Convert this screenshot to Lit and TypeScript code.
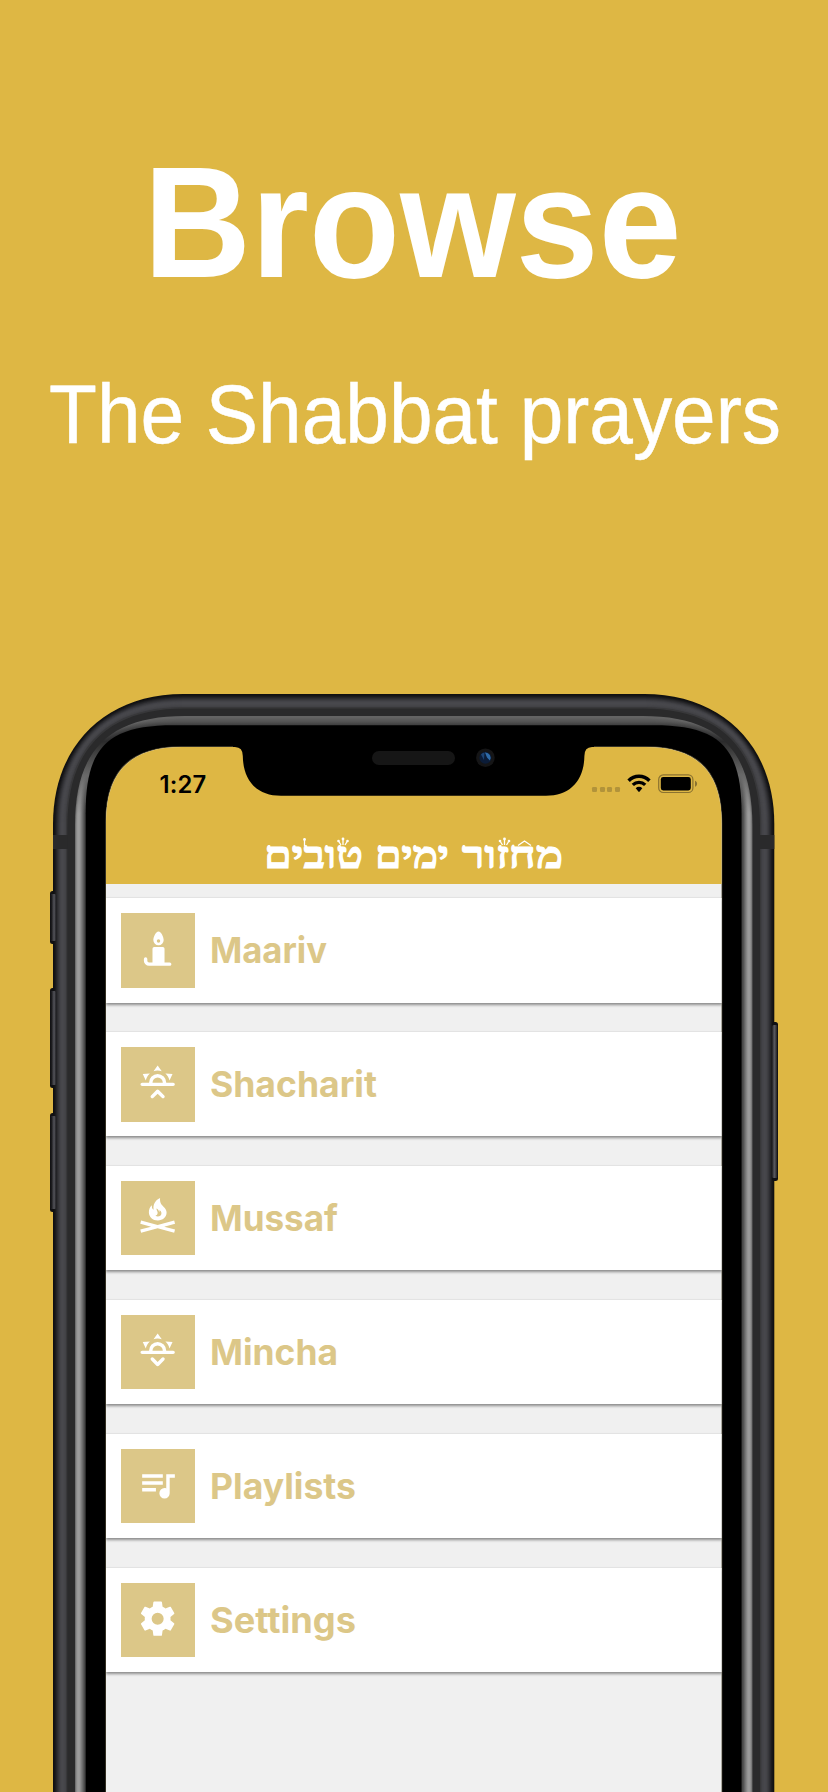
import { LitElement, html, css, svg } from "lit";
import { customElement, property } from "lit/decorators.js";

const SUNSET =
  "M3,12H7A5,5 0 0,1 12,7A5,5 0 0,1 17,12H21A1,1 0 0,1 22,13A1,1 0 0,1 21,14H3A1,1 0 0,1 2,13A1,1 0 0,1 3,12M15,12A3,3 0 0,0 12,9A3,3 0 0,0 9,12H15M12,2L14.39,5.42C13.65,5.15 12.84,5 12,5C11.16,5 10.35,5.15 9.61,5.42L12,2M3.34,7L7.5,6.65C6.9,7.16 6.36,7.78 5.94,8.5C5.5,9.24 5.25,10 5.11,10.79L3.34,7M20.65,7L18.88,10.79C18.74,10 18.47,9.23 18.05,8.5C17.63,7.78 17.1,7.15 16.5,6.64L20.65,7";

const ICONS: Record<string, string> = {
  candle:
    "M12.5,2C10.84,2 9.5,5.34 9.5,7A3,3 0 0,0 12.5,10A3,3 0 0,0 15.5,7C15.5,5.34 14.16,2 12.5,2M12.5,6.5A1,1 0 0,1 13.5,7.5A1,1 0 0,1 12.5,8.5A1,1 0 0,1 11.5,7.5A1,1 0 0,1 12.5,6.5M10,11A1,1 0 0,0 9,12V20H7A1,1 0 0,1 6,19V18A1,1 0 0,0 5,17A1,1 0 0,0 4,18V19A3,3 0 0,0 7,22H19A1,1 0 0,0 20,21A1,1 0 0,0 19,20H16V12A1,1 0 0,0 15,11H10Z",
  sunrise:
    SUNSET +
    "M12.71,16.3L15.82,19.41C16.21,19.8 16.21,20.43 15.82,20.82C15.43,21.21 14.8,21.21 14.41,20.82L12,18.41L9.59,20.82C9.2,21.21 8.57,21.21 8.18,20.82C7.79,20.43 7.79,19.8 8.18,19.41L11.29,16.3C11.5,16.1 11.74,16 12,16C12.26,16 12.5,16.1 12.71,16.3Z",
  sunset:
    SUNSET +
    "M12.71,20.71L15.82,17.6C16.21,17.21 16.21,16.57 15.82,16.18C15.43,15.79 14.8,15.79 14.41,16.18L12,18.59L9.59,16.18C9.2,15.79 8.57,15.79 8.18,16.18C7.79,16.57 7.79,17.21 8.18,17.6L11.29,20.71C11.5,20.9 11.74,21 12,21C12.26,21 12.5,20.9 12.71,20.71Z",
  campfire:
    "M13.4,1.2C13.2,3.8 14.1,5 15.4,6.2C16.5,7.2 17.2,8.3 17.2,9.6C17.2,12.4 14.9,14.2 12.1,14.2C9.2,14.2 6.9,12.2 6.9,9.4C6.9,7.9 7.5,6.3 8.7,5.4C8.5,6.6 8.8,7.5 9.7,8C9.1,5.2 10.5,2.5 13.4,1.2M11.3,7.2C11.3,8.2 12,8.8 12,9.8C12,10.7 11.5,11.3 10.7,11.4C11.8,12.4 14.2,11.9 14.2,10C14.2,9 13.7,8.6 13.1,8.1C13.2,8.6 13.1,9 12.9,9.3C12.8,8.3 12.2,7.6 11.3,7.2M2.4,14.3L12,16.9L21.6,14.3L22.1,16.1L15.8,17.8L22.1,19.5L21.6,21.4L12,18.8L2.4,21.4L1.9,19.5L8.2,17.8L1.9,16.1Z",
  playlist:
    "M15,6H3V8H15V6M15,10H3V12H15V10M3,16H11V14H3V16M17,6V14.18C16.69,14.07 16.35,14 16,14A3,3 0 0,0 13,17A3,3 0 0,0 16,20A3,3 0 0,0 19,17V8H22V6H17Z",
  cog: "M12,15.5A3.5,3.5 0 0,1 8.5,12A3.5,3.5 0 0,1 12,8.5A3.5,3.5 0 0,1 15.5,12A3.5,3.5 0 0,1 12,15.5M19.43,12.97C19.47,12.65 19.5,12.33 19.5,12C19.5,11.67 19.47,11.34 19.43,11L21.54,9.37C21.73,9.22 21.78,8.95 21.66,8.73L19.66,5.27C19.54,5.05 19.27,4.96 19.05,5.05L16.56,6.05C16.04,5.66 15.5,5.32 14.87,5.07L14.5,2.42C14.46,2.18 14.25,2 14,2H10C9.75,2 9.54,2.18 9.5,2.42L9.13,5.07C8.5,5.32 7.96,5.66 7.44,6.05L4.95,5.05C4.73,4.96 4.46,5.05 4.34,5.27L2.34,8.73C2.21,8.95 2.27,9.22 2.46,9.37L4.57,11C4.53,11.34 4.5,11.67 4.5,12C4.5,12.33 4.53,12.65 4.57,12.97L2.46,14.63C2.27,14.78 2.21,15.05 2.34,15.27L4.34,18.73C4.46,18.95 4.73,19.03 4.95,18.95L7.44,17.94C7.96,18.34 8.5,18.68 9.13,18.93L9.5,21.58C9.54,21.82 9.75,22 10,22H14C14.25,22 14.46,21.82 14.5,21.58L14.87,18.93C15.5,18.67 16.04,18.34 16.56,17.94L19.05,18.95C19.27,19.03 19.54,18.95 19.66,18.73L21.66,15.27C21.78,15.05 21.73,14.78 21.54,14.63L19.43,12.97Z",
};

const MENU = [
  { label: "Maariv", icon: "candle", width: 114 },
  { label: "Shacharit", icon: "sunrise", width: 164 },
  { label: "Mussaf", icon: "campfire", width: 125 },
  { label: "Mincha", icon: "sunset", width: 125 },
  { label: "Playlists", icon: "playlist", width: 143 },
  { label: "Settings", icon: "cog", width: 143 },
];

/* Body outline with smoothed top corners: `reach` is how far the curve runs
   along each side, `pull` how far its handles stay from the corner. */
const outline = (x0: number, y0: number, x1: number, y1: number, reach: number, pull: number) =>
  `M${x0},${y1}V${y0 + reach}C${x0},${y0 + pull} ${x0 + pull},${y0} ${x0 + reach},${y0}` +
  `H${x1 - reach}C${x1 - pull},${y0} ${x1},${y0 + pull} ${x1},${y0 + reach}V${y1}Z`;

const METAL = ["#101011", "#141416", "#1b1b1d", "#242427", "#2d2d30", "#353539", "#3d3d41", "#434348", "#47474b", "#48484d", "#47474b", "#454549", "#424246", "#38383a"];
const RIM_SIDE = ["#6f6f6f", "#8a8a8a", "#989898", "#9c9c9c", "#999999", "#8c8c8c", "#7c7c7c", "#6c6c6c", "#5a5a5a", "#484848"];
const RIM_TOP = ["#646464", "#636363", "#606060", "#5c5c5c", "#595959", "#555555", "#515151", "#4d4d4d", "#494949", "#424242"];

@customElement("phone-frame")
class PhoneFrame extends LitElement {
  static styles = css`
    :host { display: block; }
    svg { display: block; }
  `;
  render() {
    const B = 1110;
    return html`<svg width="828" height="1098" viewBox="0 0 828 1098" aria-hidden="true">
      <defs>
        <linearGradient id="bl"><stop offset="0" stop-color="#101012" /><stop offset=".25" stop-color="#2c2c30" /><stop offset=".6" stop-color="#55555b" /><stop offset="1" stop-color="#1b1b1e" /></linearGradient>
        <linearGradient id="br"><stop offset="0" stop-color="#1b1b1e" /><stop offset=".4" stop-color="#5a5a60" /><stop offset=".7" stop-color="#3a3a3e" /><stop offset="1" stop-color="#101012" /></linearGradient>
        ${RIM_SIDE.map(
          (side, i) => svg`<linearGradient id=${"rim" + i} gradientUnits="userSpaceOnUse" x1="0" x2="0" y1="22" y2="120">
            <stop offset="0" stop-color=${RIM_TOP[i]} />
            <stop offset=".06" stop-color=${RIM_TOP[i]} />
            <stop offset=".26" stop-color="#2b2b2c" />
            <stop offset=".31" stop-color="#343434" />
            <stop offset=".6" stop-color="#686868" />
            <stop offset="1" stop-color=${side} />
          </linearGradient>`
        )}
      </defs>
      ${[[197, 53], [294, 100], [419, 99]].map(
        ([y, h]) => svg`<rect x="50" y=${y} width="8" height=${h} rx="2.5" fill="#101012" /><rect x="50.3" y=${y + 3} width="6" height=${h - 6} rx="1.5" fill="url(#bl)" />`
      )}
      ${METAL.map((c, i) => svg`<path d=${outline(53 + i, i, 774.3 - i, B, 130 - i, 52 - i * 0.85)} fill=${c} />`)}
      ${[[197, 53], [294, 100], [419, 99]].map(
        ([y, h]) => svg`<rect x="51" y=${y + 3} width="5.2" height=${h - 6} rx="1.5" fill="url(#bl)" />`
      )}
      <rect x="772" y="328" width="6" height="159" rx="2.5" fill="#101012" />
      <rect x="772" y="331" width="5.7" height="153" rx="1.5" fill="url(#br)" />
      <path d="M53,141H68V155H53ZM759.3,141H774.3V155H759.3Z" fill="#2a2a2b" />
      <path d=${outline(67.3, 14.6, 760, B, 118, 40)} fill="#2a2a2b" />
      ${RIM_SIDE.map((_, i) => svg`<path d=${outline(75 + i, 22 + i * 0.95, 752.4 - i, B, 110 - i * 2.5, 34 - i)} fill=${`url(#rim${i})`} />`)}
      <path d=${outline(85.6, 31.3, 741.6, B, 88, 22)} fill="#000" />
      <path d=${outline(105.3, 52.2, 722.3, B, 76, 24.5)} fill="#4b4532" />
    </svg>`;
  }
}

@customElement("status-bar")
class StatusBar extends LitElement {
  static styles = css`
    :host { display: flex; justify-content: space-between; height: 91px; padding: 0 24px 0 53.5px; box-sizing: border-box; }
    .time { margin-top: 22.5px; font: 600 23.8px/30px Inter, "Liberation Sans", sans-serif; color: #000; letter-spacing: 0.2px; }
    .right { display: flex; margin-top: 27px; height: 20px; gap: 7px; }
    .dots { display: flex; gap: 2.5px; margin-top: 13px; }
    .dot { width: 5px; height: 5px; border-radius: 1.3px; background: #b2933a; }
    svg { display: block; }
  `;
  render() {
    return html`
      <span class="time">1:27</span>
      <span class="right">
        <span class="dots">${[0, 1, 2, 3].map(() => html`<i class="dot"></i>`)}</span>
        <svg width="24" height="20" viewBox="0 0 24 20">
          <path d="M1.6,6.7A14.6,14.6 0 0 1 22.4,6.7" fill="none" stroke="#000" stroke-width="3.5" />
          <path d="M5.8,10.9A8.8,8.8 0 0 1 18.2,10.9" fill="none" stroke="#000" stroke-width="3.3" />
          <path d="M8.7,14.2A4.7,4.7 0 0 1 15.3,14.2L12,18.2Z" fill="#000" />
        </svg>
        <svg width="40" height="20" viewBox="0 0 40 20">
          <rect x=".7" y=".9" width="34.2" height="17.6" rx="4.6" fill="none" stroke="#8a7230" stroke-width="1.2" />
          <rect x="2.8" y="3" width="30" height="13.4" rx="2.4" fill="#000" />
          <path d="M37,6.7C39.8,7.6 39.8,11.8 37,12.7Z" fill="#8a7230" />
        </svg>
      </span>`;
  }
}

@customElement("prayer-row")
class PrayerRow extends LitElement {
  @property() label = "";
  @property() icon = "";
  @property({ type: Number }) inkWidth = 100;
  static styles = css`
    :host {
      display: flex; align-items: center; gap: 16px; height: 104.2px; padding: 0 15px; box-sizing: border-box;
      background: #fff; box-shadow: 0 1.8px 2.6px rgba(0, 0, 0, 0.42), 0 -1px 1px rgba(0, 0, 0, 0.04);
    }
    .tile { display: grid; place-items: center; width: 74.3px; height: 74.3px; padding: 0 1px 3px 0; box-sizing: border-box; background: #dcc788; }
    .icon { display: block; width: 41.3px; height: 41.3px; fill: #fff; fill-rule: evenodd; }
    .label { display: block; width: 300px; height: 60px; fill: #dcc788; font: 650 35.4px Inter, "Liberation Sans", sans-serif; }
  `;
  render() {
    return html`
      <span class="tile"><svg class="icon" viewBox="0 0 24 24"><path d=${ICONS[this.icon]} /></svg></span>
      <svg class="label" viewBox="0 0 300 60"><text x="-1" y="43.1" textLength=${this.inkWidth + 3} lengthAdjust="spacingAndGlyphs">${this.label}</text></svg>`;
  }
}

@customElement("app-root")
class AppRoot extends LitElement {
  static styles = css`
    :host { display: block; width: 828px; height: 1792px; overflow: hidden; background: #deb744; }
    .hero { display: block; overflow: visible; }
    .hero text { fill: #fff; font-family: "Liberation Sans", Arial, sans-serif; }
    .big { font-size: 158px; font-weight: 700; }
    .small { font-size: 83px; stroke: #fff; stroke-width: 0.5; }
    .phone { display: grid; height: 1098px; overflow: hidden; }
    .phone > * { grid-area: 1 / 1; }
    .screen {
      width: 615.6px; height: 1045px; margin: 53px 0 0 106px; background: #f0f0f0;
      clip-path: path("M0,1045V76C0,24.5 24.5,0 76,0H539.6C591.1,0 615.6,24.5 615.6,76V1045Z");
    }
    .bar { height: 136.6px; background: #deb744; }
    .title { display: block; overflow: visible; }
    .title text { fill: #fff; stroke: #fff; stroke-width: 1.1; font: 700 38px "Liberation Serif", "DejaVu Sans", serif; }
    .title path { fill: none; stroke: #fff; stroke-width: 1.3; }
    .title circle { fill: #fff; }
    .list { display: flex; flex-direction: column; gap: 29.7px; padding-top: 14.8px; }
    .notch { display: block; margin: 52px 0 0 230px; isolation: isolate; position: relative; z-index: 1; }
  `;
  render() {
    const crown = (x: number, y: number) => svg`
      <path d=${`M${x - 4.5},${y - 4}L${x - 2},${y}M${x},${y - 6}V${y}M${x + 4.5},${y - 4}L${x + 2},${y}`} />
      <circle cx=${x - 4.5} cy=${y - 4} r="1.3" /><circle cx=${x} cy=${y - 6} r="1.4" /><circle cx=${x + 4.5} cy=${y - 4} r="1.3" />`;
    return html`
      <svg class="hero" width="828" height="694" viewBox="0 0 828 694">
        <text class="big" x="143.5" y="276.7" textLength="538" lengthAdjust="spacingAndGlyphs">Browse</text>
        <text class="small" x="49" y="443.3" textLength="732" lengthAdjust="spacingAndGlyphs">The Shabbat prayers</text>
      </svg>
      <main class="phone">
        <phone-frame></phone-frame>
        <section class="screen">
          <header class="bar">
            <status-bar></status-bar>
            <svg class="title" width="615" height="45" viewBox="0 0 615 45">
              <text x="356" y="29.5" textLength="101" lengthAdjust="spacingAndGlyphs">מחזור</text>
              <text x="269" y="29.5" textLength="74" lengthAdjust="spacingAndGlyphs">ימים</text>
              <text x="158" y="29.5" textLength="99" lengthAdjust="spacingAndGlyphs">טובים</text>
              ${crown(398.5, 7)} ${crown(237, 7)}
              <path d="M412,7.5L418.5,3L425,7.5" />
              <path d="M198.5,2V8" /><circle cx="198.5" cy="1.5" r="1.4" />
            </svg>
          </header>
          <div class="list">
            ${MENU.map((m) => html`<prayer-row .label=${m.label} .icon=${m.icon} .inkWidth=${m.width}></prayer-row>`)}
          </div>
        </section>
        <svg class="notch" width="370" height="52" viewBox="230 52 370 52" aria-hidden="true">
          <path d="M233,51V53H235Q242.8,53.2 242.8,62C243.2,87 257,101.7 281,101.7H546C570,101.7 584,87 584.4,62Q584.4,53.2 592,53H594V51Z" fill="#000" />
          <rect x="372" y="57" width="83" height="14" rx="7" fill="#161616" />
          <circle cx="485.4" cy="63.7" r="9.3" fill="#151516" />
          <circle cx="485.4" cy="63.7" r="6" fill="#0b1c38" />
          <path d="M485,58.4A5.3,5.3 0 0 1 489.8,66.5L487,63.5Z" fill="#2f6ba8" />
          <path d="M481,60.5A5.3,5.3 0 0 1 484.5,58.4L484,66Z" fill="#1d4474" />
        </svg>
      </main>`;
  }
}
